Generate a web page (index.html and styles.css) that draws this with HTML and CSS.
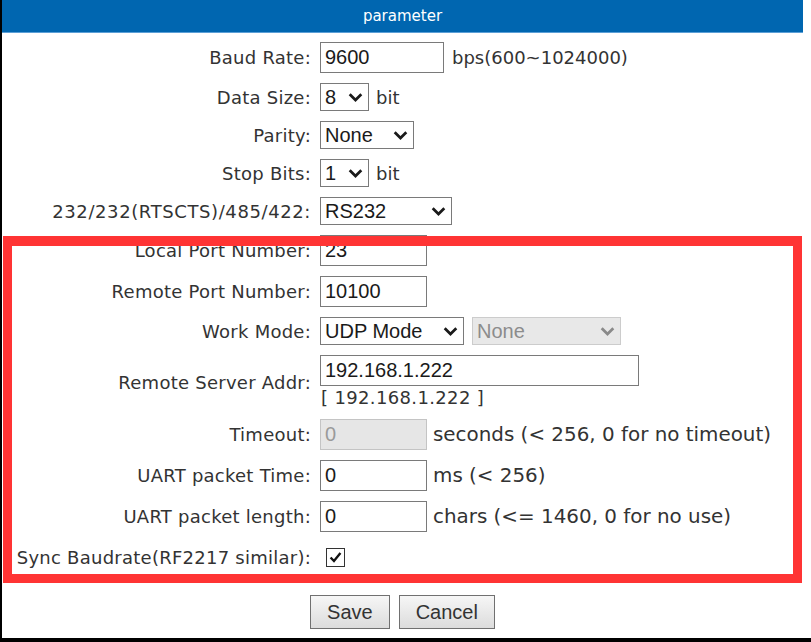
FILE: index.html
```html
<!DOCTYPE html>
<html>
<head>
<meta charset="utf-8">
<link rel="stylesheet" href="styles.css">
</head>
<body>
<div class="page">
  <div class="panel">
    <div class="title">parameter</div>
    <div class="form">
      <div class="row">
        <div class="label">Baud Rate:</div>
        <div class="field"><span class="input w124">9600</span><span class="note gap8">bps(600~1024000)</span></div>
      </div>
      <div class="row">
        <div class="label">Data Size:</div>
        <div class="field"><span class="select w49"><span class="val">8</span><svg class="chev" viewBox="0 0 14 9"><polyline points="1.2,1.2 7,7 12.8,1.2"/></svg></span><span class="note">bit</span></div>
      </div>
      <div class="row">
        <div class="label">Parity:</div>
        <div class="field"><span class="select w94"><span class="val">None</span><svg class="chev" viewBox="0 0 14 9"><polyline points="1.2,1.2 7,7 12.8,1.2"/></svg></span></div>
      </div>
      <div class="row">
        <div class="label">Stop Bits:</div>
        <div class="field"><span class="select w49"><span class="val">1</span><svg class="chev" viewBox="0 0 14 9"><polyline points="1.2,1.2 7,7 12.8,1.2"/></svg></span><span class="note">bit</span></div>
      </div>
      <div class="row">
        <div class="label wide">232/232(RTSCTS)/485/422:</div>
        <div class="field"><span class="select w132"><span class="val">RS232</span><svg class="chev" viewBox="0 0 14 9"><polyline points="1.2,1.2 7,7 12.8,1.2"/></svg></span></div>
      </div>
      <div class="row">
        <div class="label">Local Port Number:</div>
        <div class="field"><span class="input w107">23</span></div>
      </div>
      <div class="row">
        <div class="label">Remote Port Number:</div>
        <div class="field"><span class="input w107">10100</span></div>
      </div>
      <div class="row">
        <div class="label">Work Mode:</div>
        <div class="field"><span class="select w144"><span class="val">UDP Mode</span><svg class="chev" viewBox="0 0 14 9"><polyline points="1.2,1.2 7,7 12.8,1.2"/></svg></span><span class="select disabled w149 gap8"><span class="val">None</span><svg class="chev" viewBox="0 0 14 9"><polyline points="1.2,1.2 7,7 12.8,1.2"/></svg></span></div>
      </div>
      <div class="row">
        <div class="label">Remote Server Addr:</div>
        <div class="field stack"><span class="input w319">192.168.1.222</span><span class="resolved">[ 192.168.1.222 ]</span></div>
      </div>
      <div class="row">
        <div class="label">Timeout:</div>
        <div class="field"><span class="input disabled w107">0</span><span class="note big gap6">seconds (&lt; 256, 0 for no timeout)</span></div>
      </div>
      <div class="row">
        <div class="label">UART packet Time:</div>
        <div class="field"><span class="input w107">0</span><span class="note big gap6">ms (&lt; 256)</span></div>
      </div>
      <div class="row">
        <div class="label">UART packet length:</div>
        <div class="field"><span class="input w107">0</span><span class="note big gap6">chars (&lt;= 1460, 0 for no use)</span></div>
      </div>
      <div class="row check-row">
        <div class="label">Sync Baudrate(RF2217 similar):</div>
        <div class="field"><span class="checkbox"><svg viewBox="0 0 19 19"><polyline points="4,9.5 7.8,13.5 15,4.5"/></svg></span></div>
      </div>
    </div>
    <div class="buttons">
      <button class="btn">Save</button>
      <button class="btn">Cancel</button>
    </div>
  </div>
  <div class="highlight"></div>
</div>
</body>
</html>
```

FILE: styles.css
```css
html, body {
  margin: 0;
  padding: 0;
  background: #ffffff;
}

.page {
  position: relative;
  width: 811px;
  height: 642px;
  box-sizing: border-box;
  border-left: 2px solid #000;
  border-bottom: 4px solid #000;
  overflow: hidden;
}

.panel {
  width: 801px;
}

.title {
  height: 32px;
  line-height: 32px;
  background: #0066b0;
  border-bottom: 1px solid #5c9fd6;
  color: #ffffff;
  text-align: center;
  font-family: "DejaVu Sans", sans-serif;
  font-size: 15px;
}

.form {
  padding-top: 4px;
}

.row {
  display: grid;
  grid-template-columns: 309px 1fr;
  column-gap: 9px;
  align-items: center;
  padding: 5px 0;
}

.check-row {
  min-height: 30px;
}

.label {
  text-align: right;
  font-family: "DejaVu Sans", Verdana, sans-serif;
  font-size: 18px;
  letter-spacing: 0.25px;
  color: #333333;
  white-space: nowrap;
}

.label.wide {
  letter-spacing: 0.6px;
}

.field {
  display: flex;
  align-items: center;
}

.field.stack {
  flex-direction: column;
  align-items: flex-start;
}

.note {
  margin-left: 7px;
  font-family: "DejaVu Sans", Verdana, sans-serif;
  font-size: 18px;
  color: #333333;
  white-space: nowrap;
}

.note.big {
  font-size: 19.9px;
}

.gap8 { margin-left: 8px; }
.gap6 { margin-left: 6px; }

.resolved {
  font-family: "DejaVu Sans", Verdana, sans-serif;
  font-size: 18px;
  letter-spacing: 0.35px;
  color: #333333;
  line-height: 23px;
  padding-left: 1px;
}

.input {
  box-sizing: border-box;
  height: 31px;
  display: inline-flex;
  align-items: center;
  padding: 0 4px;
  border: 1px solid #7a7a7a;
  background: #ffffff;
  font-family: "Liberation Sans", Arial, sans-serif;
  font-size: 20px;
  color: #1a1a1a;
}

.input.disabled {
  background: #e6e6e6;
  border-color: #c4c4c4;
  color: #9a9a9a;
}

.select {
  box-sizing: border-box;
  height: 28px;
  display: inline-flex;
  align-items: center;
  justify-content: space-between;
  padding: 0 5px 0 4px;
  border: 1px solid #7a7a7a;
  background: #ffffff;
  font-family: "Liberation Sans", Arial, sans-serif;
  font-size: 20px;
  color: #1a1a1a;
}

.select.disabled {
  background: #e8e8e8;
  border-color: #cccccc;
  color: #8c8c8c;
}

.chev {
  width: 15px;
  height: 9px;
  flex: none;
}

.chev polyline {
  fill: none;
  stroke: #1a1a1a;
  stroke-width: 2.7;
}

.select.disabled .chev polyline {
  stroke: #8a8a8a;
}

.w49 { width: 49px; }
.w94 { width: 94px; }
.w107 { width: 107px; }
.w124 { width: 124px; }
.w132 { width: 132px; }
.w144 { width: 144px; }
.w149 { width: 149px; }
.w319 { width: 319px; }

.checkbox {
  box-sizing: border-box;
  width: 19px;
  height: 19px;
  margin-left: 6px;
  border: 1px solid #333333;
  background: #ffffff;
  display: inline-block;
}

.checkbox svg {
  display: block;
  width: 17px;
  height: 17px;
}

.checkbox polyline {
  fill: none;
  stroke: #111111;
  stroke-width: 2.6;
}

.buttons {
  display: flex;
  justify-content: center;
  gap: 9px;
  padding-top: 18px;
}

.btn {
  box-sizing: border-box;
  height: 34px;
  padding: 0 16px;
  border: 1px solid #707070;
  border-radius: 0;
  background: linear-gradient(#f6f6f6, #dcdcdc);
  font-family: "Liberation Sans", Arial, sans-serif;
  font-size: 20px;
  color: #333333;
}

.highlight {
  position: absolute;
  left: 1px;
  top: 236px;
  width: 799px;
  height: 347px;
  box-sizing: border-box;
  border: 9px solid #ff3434;
  border-top-width: 10px;
  pointer-events: none;
}
```
